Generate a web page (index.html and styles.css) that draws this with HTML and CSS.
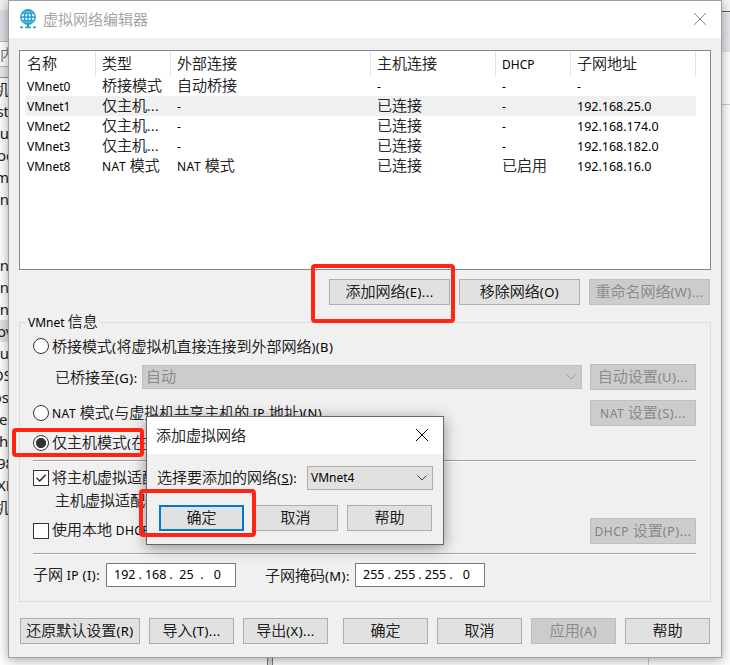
FILE: index.html
```html
<!DOCTYPE html>
<html lang="zh-CN">
<head>
<meta charset="utf-8">
<title>虚拟网络编辑器</title>
<link rel="stylesheet" href="styles.css">
</head>
<body>
<div class="desktop">
  <div class="behind-left">
    <div class="strip-top"></div>
    <div class="strip-tab">内</div>
    <div class="strip-gap"></div>
    <div class="strip-list">
      <p>机</p><p>st</p><p>u</p><p class="cut">oc</p><p>m</p><p>n</p><p></p><p></p><p>en</p><p>en</p><p>en</p><p class="cut hot">ov</p><p>tu</p><p class="cut far">OS</p><p>ps</p><p class="cut near">eC</p><p class="cut near">ha</p><p class="cut">98</p><p class="cut">XP</p><p>机</p>
    </div>
  </div>
  <div class="behind-right"><div class="r-top"></div><div class="r-tab"></div><div class="r-row"></div></div>
  <div class="behind-bottom"><i class="splitter"></i><i class="edge"></i></div>

  <div class="window">
    <div class="titlebar">
      <svg class="app-icon" width="18" height="20" viewBox="0 0 18 20">
        <g fill="none" stroke="#249fd2" stroke-width="1.5"><circle cx="9" cy="8" r="7.2"/><ellipse cx="9" cy="8" rx="3.5" ry="7.2"/><path d="M9 1v14M2 8h14M3 4.3h12M3 11.700h12"/></g>
        <path d="M9 15v3" stroke="#249fd2" stroke-width="2"/><path d="M1 18.300h3M6 18.300h6M14 18.300h3" stroke="#3aa79b" stroke-width="1.8"/>
      </svg>
      <span class="title">虚拟网络编辑器</span>
      <svg class="close" width="12" height="12" viewBox="0 0 12 12"><path d="M0 0L12 12M12 0L0 12"/></svg>
    </div>
    <div class="body">
      <div class="list">
        <div class="row head"><span>名称</span><span>类型</span><span>外部连接</span><span>主机连接</span><span><b>DHCP</b></span><span>子网地址</span></div>
        <div class="row"><span><b>VMnet0</b></span><span>桥接模式</span><span>自动桥接</span><span><b>-</b></span><span><b>-</b></span><span><b>-</b></span></div>
        <div class="row selected"><span><b>VMnet1</b></span><span>仅主机<b class="k">...</b></span><span><b>-</b></span><span>已连接</span><span><b>-</b></span><span><b class="ip">192.168.25.0</b></span></div>
        <div class="row"><span><b>VMnet2</b></span><span>仅主机<b class="k">...</b></span><span><b>-</b></span><span>已连接</span><span><b>-</b></span><span><b class="ip">192.168.174.0</b></span></div>
        <div class="row"><span><b>VMnet3</b></span><span>仅主机<b class="k">...</b></span><span><b>-</b></span><span>已连接</span><span><b>-</b></span><span><b class="ip">192.168.182.0</b></span></div>
        <div class="row"><span><b>VMnet8</b></span><span><b class="n">NAT </b>模式</span><span><b class="n">NAT </b>模式</span><span>已连接</span><span>已启用</span><span><b class="ip">192.168.16.0</b></span></div>
      </div>
      <div class="actions">
        <div class="btn w121">添加网络<b class="k">(E)...</b></div>
        <div class="btn w121">移除网络<b class="k">(O)</b></div>
        <div class="btn w121 off">重命名网络<b class="k">(W)...</b></div>
      </div>
      <div class="group">
        <div class="legend"><b>VMnet </b>信息</div>
        <div class="line h30"><i class="radio"></i><span class="txt">桥接模式<b class="k">(</b>将虚拟机直接连接到外部网络<b class="k">)(B)</b></span></div>
        <div class="line h32">
          <span class="txt bridged">已桥接至<b class="k">(G):</b></span>
          <div class="select wide off"><span>自动</span><svg width="10" height="6" viewBox="0 0 10 6"><path d="M.5 .5L5 5L9.500 .5"/></svg></div>
          <div class="btn w106 off">自动设置<b class="k">(U)...</b></div>
        </div>
        <div class="line h40"><i class="radio"></i><span class="txt"><b class="n">NAT </b>模式<b class="k">(</b>与虚拟机共享主机的<b class="n"> IP </b>地址<b class="k">)(N)</b></span><div class="btn w106 off end"><b class="n">NAT </b>设置<b class="k">(S)...</b></div></div>
        <div class="line h20"><i class="radio on"></i><span class="txt raised">仅主机模式<b class="k">(</b>在</span></div>
        <div class="rule first"></div>
        <div class="line h32"><i class="check"><svg width="14" height="14" viewBox="0 0 14 14"><path d="M2.500 6.800L5.700 10L11.700 3.800"/></svg></i><span class="txt raised">将主机虚拟适配</span></div>
        <div class="line h14"><span class="txt indent raised">主机虚拟适配器</span></div>
        <div class="line h45"><i class="check"></i><span class="txt raised">使用本地<b class="n"> DHCP</b></span><div class="btn w106 off end"><b class="n">DHCP </b>设置<b class="k">(P)...</b></div></div>
        <div class="rule"></div>
        <div class="line h40">
          <span class="subnet">子网<b class="n"> IP </b><b class="k">(I):</b></span>
          <div class="address"><span>192</span>.<span>168</span>.<span>25</span>.<span>0</span></div>
          <span class="mask">子网掩码<b class="k">(M):</b></span>
          <div class="address"><span>255</span>.<span>255</span>.<span>255</span>.<span>0</span></div>
        </div>
      </div>
      <div class="footer">
        <div class="btn w120">还原默认设置<b class="k">(R)</b></div>
        <div class="btn w85">导入<b class="k">(T)...</b></div>
        <div class="btn w85">导出<b class="k">(X)...</b></div>
        <div class="btn w85 ok">确定</div>
        <div class="btn w85">取消</div>
        <div class="btn w85 off">应用<b class="k">(A)</b></div>
        <div class="btn w85">帮助</div>
      </div>
    </div>
  </div>

  <div class="dialog">
    <div class="dialog-title"><span>添加虚拟网络</span><svg class="close" width="12" height="12" viewBox="0 0 12 12"><path d="M0 0L12 12M12 0L0 12"/></svg></div>
    <div class="dialog-row"><span class="dialog-label raised">选择要添加的网络<b class="k">(<u>S</u>):</b></span>
      <div class="select small"><b>VMnet4</b><svg width="10" height="6" viewBox="0 0 10 6"><path d="M.5 .5L5 5L9.500 .5"/></svg></div>
    </div>
    <div class="dialog-buttons"><div class="btn w85 focus">确定</div><div class="btn w85">取消</div><div class="btn w85">帮助</div></div>
  </div>

  <div class="mark mark-add"></div>
  <div class="mark mark-host"></div>
  <div class="mark mark-ok"></div>
</div>
</body>
</html>
```
FILE: styles.css
```css
* { box-sizing: border-box; }
body { margin: 0; font: 300 15px/20px "Noto Sans CJK SC", sans-serif; color: #000; -webkit-text-stroke: .2px; }
b { font: 400 12px/20px "Noto Sans", sans-serif; white-space: pre; -webkit-text-stroke: 0; }
b.k { font-size: 13px; letter-spacing: .45px; }
b.n { letter-spacing: .5px; }
i { flex: none; }
p { margin: 0; }
.desktop { position: relative; width: 730px; height: 665px; overflow: hidden; background: #fdfdfd; }

.behind-left { width: 9px; overflow: hidden; color: #222; font: 15px/22px "Noto Sans", "Noto Sans CJK SC", sans-serif; -webkit-text-stroke: 0; }
.strip-top { height: 41px; background: #dadde2; border-top: 10px solid #f0f0f0; }
.strip-tab { height: 26px; border: solid #b5b5b5; border-width: 1px 0; background: #fff; color: #777; line-height: 24px; }
.strip-gap { height: 11px; background: #e6e8eb; border-bottom: 1px solid #8d929a; }
.strip-list p { height: 22px; width: 9px; display: flex; justify-content: flex-end; }
.strip-list p.cut { justify-content: flex-start; text-indent: -3px; }
.strip-list p.far { text-indent: -8px; }
.strip-list p.near { text-indent: -1px; }
.strip-list p.hot { background: #e2e2e2; }
.behind-right { position: absolute; right: 0; top: 0; width: 9px; height: 665px; }
.r-top { height: 12px; border-bottom: 1px solid #555; background: #f5f5f5; }
.r-tab { height: 40px; background: #e3e5e9; border-top: 1px solid #eee; }
.r-row { height: 53px; border-bottom: 1px solid #ccc; }
.behind-bottom { position: absolute; left: 0; bottom: 0; width: 730px; height: 8px; display: flex; }
.splitter { width: 6px; margin-left: 267px; border: 1px solid #777; border-width: 0 1px; background: #d5d8df; }
.edge { width: 1px; margin-left: 375px; background: #ccc; }

.window { position: absolute; left: 8px; top: 0; width: 714px; height: 658px; border: 1px solid #a0a0a0; background: #f0f0f0; box-shadow: 0 2px 10px rgba(0,0,0,.35); }
.titlebar { height: 37px; background: #fff; display: flex; align-items: center; padding: 0 15px 0 10px; color: #999; }
.app-icon { margin-bottom: 2px; }
.title { margin-left: 6px; padding-bottom: 2px; }
.close { margin: 0 0 1px auto; fill: none; stroke: #888; stroke-width: 1; overflow: visible; }
.body { padding: 12px 10px 0; }

.list { width: 692px; height: 220px; border: 1px solid #828790; background: #fff; }
.row { display: grid; grid-template-columns: 71px 75px 200px 125px 75px 125px; width: 671px; height: 20px; margin-left: 5px; line-height: 18px; }
.row b { line-height: 18px; }
.row > span { padding-left: 6px; white-space: nowrap; height: 20px; }
.row > span:first-child { padding-left: 2px; }
.row.head { height: 25px; padding-top: 1px; }
.row.head > span { height: 24px; border-right: 1px solid #e2e2e2; line-height: 21px; }
.row.selected { background: #f0f0f0; }
b.ip { font-size: 12.5px; }

.actions { display: flex; justify-content: flex-end; gap: 9px; padding: 9px 1px 0 0; }
.btn { flex: none; height: 26px; border: 1px solid #adadad; background: #e1e1e1; text-align: center; line-height: 22px; white-space: nowrap; }
.btn b { line-height: 20px; }
.btn.off { background: #ccc; border-color: #bfbfbf; color: #838383; }
.w121 { width: 121px; } .w120 { width: 120px; } .w106 { width: 106px; } .w85 { width: 85px; }
.end { margin-left: auto; }

.group { position: relative; width: 692px; height: 280px; margin-top: 17px; border: 1px solid #dcdcdc; padding: 8px 14px 0 13px; }
.legend { position: absolute; left: 6px; top: -12px; padding: 0 2px; background: #f0f0f0; }
.line { display: flex; align-items: center; white-space: nowrap; }
.h14 { height: 14px; } .h20 { height: 20px; } .h30 { height: 30px; } .h32 { height: 32px; } .h40 { height: 40px; } .h45 { height: 45px; }
.txt { margin-left: 3px; }
.raised { padding-bottom: 2px; }
.radio { width: 16px; height: 16px; border: 1px solid #333; border-radius: 50%; background: #fff; }
.radio.on { background: radial-gradient(circle, #333 4.7px, #fff 5.4px); }
.check { width: 16px; height: 16px; border: 1px solid #333; background: #fff; display: flex; }
.check svg { fill: none; stroke: #222; stroke-width: 1.3; }
.indent { margin-left: 22px; }
.bridged { width: 87px; margin-left: 22px; }
.select { flex: none; display: flex; align-items: center; justify-content: space-between; height: 24px; border: 1px solid #adadad; background: #e1e1e1; padding: 0 5px 0 3px; }
.select svg { fill: none; stroke: #444; }
.select.wide { width: 440px; margin-right: 8px; }
.select.wide span { padding-bottom: 2px; }
.select.off { background: #ccc; border-color: #bfbfbf; color: #838383; }
.select.off svg { stroke: #999; }
.select.small { width: 126px; }
.rule { height: 2px; background: #fff; border-top: 1px solid #a0a0a0; }
.rule.first { margin-top: 7px; }
.subnet { width: 73px; }
.mask { width: 90px; margin-left: 29px; }
.address { width: 130px; height: 24px; border: 1px solid #7a7a7a; background: #fff; display: flex; padding-left: 4px; font: 12.5px/22px "Noto Sans", sans-serif; -webkit-text-stroke: 0; }
.address span { width: 27.5px; text-align: center; }

.footer { display: flex; gap: 9px; padding: 16px 0 0 1px; width: 692px; }
.ok { margin-left: 6px; }

.dialog { position: absolute; left: 146px; top: 416px; width: 298px; height: 129px; border: 1px solid #666; background: #f0f0f0; box-shadow: 0 3px 14px rgba(0,0,0,.4); }
.dialog-title { height: 37px; background: #fff; display: flex; align-items: center; padding: 0 15px 0 9px; }
.dialog-title span { padding-bottom: 2px; }
.dialog-title .close { stroke: #000; margin-bottom: 2px; }
.dialog-row { display: flex; align-items: center; height: 48px; padding-left: 10px; }
.dialog-label { width: 150px; white-space: nowrap; }
.dialog-buttons { display: flex; gap: 9px; padding: 3px 0 0 12px; }
.focus { border: 2px solid #0078d7; line-height: 20px; }

.mark { position: absolute; border: 4px solid #ff2414; border-radius: 4px; }
.mark-add { left: 311px; top: 264px; width: 144px; height: 59px; }
.mark-host { left: 12px; top: 428px; width: 132px; height: 29px; }
.mark-ok { left: 139px; top: 489px; width: 117px; height: 48px; }
```
